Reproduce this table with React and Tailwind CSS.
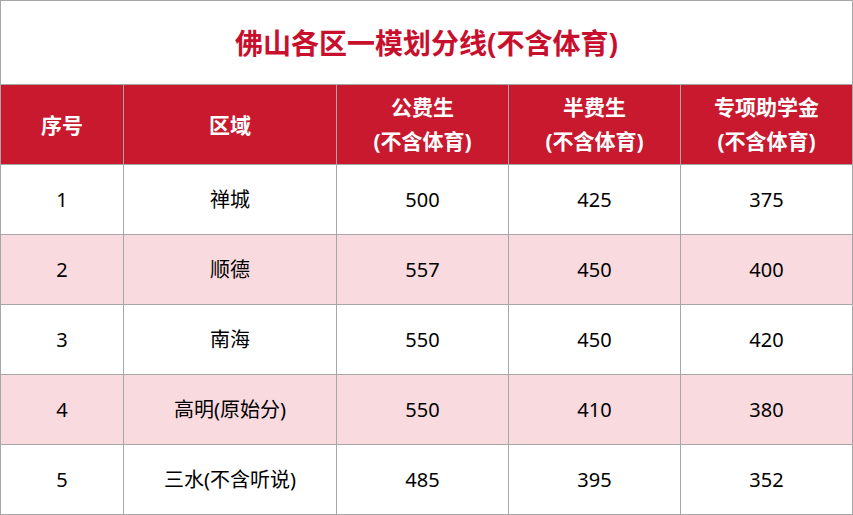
import React from "react";

const rows = [
  ["1", "禅城", "500", "425", "375"],
  ["2", "顺德", "557", "450", "400"],
  ["3", "南海", "550", "450", "420"],
  ["4", "高明(原始分)", "550", "410", "380"],
  ["5", "三水(不含听说)", "485", "395", "352"],
];

const widths = ["w-[123px]", "w-[213px]", "w-[172px]", "w-[172px]", "w-[172px]"];

export default function App() {
  const font = { fontFamily: '"Noto Sans", "Noto Sans CJK SC", sans-serif' };
  return (
    <div
      className="w-[853px] h-[515px] bg-white border-l border-t border-[#a6a6a6] flex flex-col"
      style={font}
    >
      <div className="h-[84px] border-b border-r border-[#a6a6a6] flex items-center justify-center">
        <span className="text-[28px] font-bold text-[#c8102e] leading-none">
          佛山各区一模划分线(不含体育)
        </span>
      </div>
      <div className="h-[80px] flex bg-[#c8192f] text-white font-bold text-[21px] leading-[34px]">
        <div className={`${widths[0]} border-r border-b border-[#a6a6a6] flex items-center justify-center`}>序号</div>
        <div className={`${widths[1]} border-r border-b border-[#a6a6a6] flex items-center justify-center`}>区域</div>
        <div className={`${widths[2]} border-r border-b border-[#a6a6a6] flex flex-col items-center justify-center pb-[2px]`}>
          <span>公费生</span>
          <span>(不含体育)</span>
        </div>
        <div className={`${widths[3]} border-r border-b border-[#a6a6a6] flex flex-col items-center justify-center pb-[2px]`}>
          <span>半费生</span>
          <span>(不含体育)</span>
        </div>
        <div className={`${widths[4]} border-r border-b border-[#a6a6a6] flex flex-col items-center justify-center pb-[2px]`}>
          <span>专项助学金</span>
          <span>(不含体育)</span>
        </div>
      </div>
      {rows.map((r, i) => (
        <div
          key={i}
          className={`h-[70px] flex text-[20px] text-black ${i % 2 === 1 ? "bg-[#f9dadf]" : "bg-white"}`}
        >
          {r.map((c, j) => (
            <div
              key={j}
              className={`${widths[j]} border-r border-b border-[#a6a6a6] flex items-center justify-center pt-[1px]`}
            >
              {c}
            </div>
          ))}
        </div>
      ))}
    </div>
  );
}
